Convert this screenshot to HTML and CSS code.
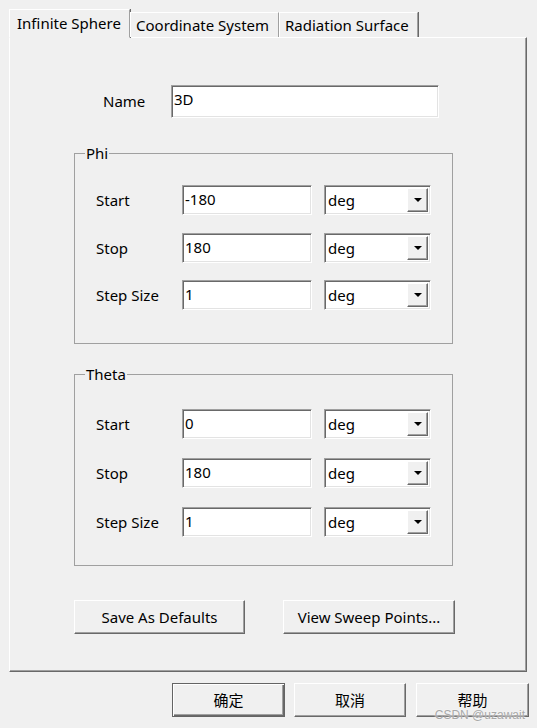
FILE: index.html
```html
<!DOCTYPE html>
<html>
<head>
<meta charset="utf-8">
<link rel="stylesheet" href="styles.css">
</head>
<body>
<div class="dialog">
  <div class="tabs">
    <div class="tab active t1">Infinite Sphere</div>
    <div class="tab t2">Coordinate System</div>
    <div class="tab t3">Radiation Surface</div>
  </div>
  <div class="panel">
    <div class="name-row">
      <span class="label name-label">Name</span>
      <div class="field name-field">3D</div>
    </div>
    <div class="group phi">
      <span class="legend">Phi</span>
      <div class="grid">
        <span class="label">Start</span>
        <div class="field">-180</div>
        <div class="select"><span class="sel-text">deg</span><span class="drop"><span class="arrow"></span></span></div>
        <span class="label">Stop</span>
        <div class="field">180</div>
        <div class="select"><span class="sel-text">deg</span><span class="drop"><span class="arrow"></span></span></div>
        <span class="label">Step Size</span>
        <div class="field">1</div>
        <div class="select"><span class="sel-text">deg</span><span class="drop"><span class="arrow"></span></span></div>
      </div>
    </div>
    <div class="group theta">
      <span class="legend">Theta</span>
      <div class="grid">
        <span class="label">Start</span>
        <div class="field">0</div>
        <div class="select"><span class="sel-text">deg</span><span class="drop"><span class="arrow"></span></span></div>
        <span class="label">Stop</span>
        <div class="field">180</div>
        <div class="select"><span class="sel-text">deg</span><span class="drop"><span class="arrow"></span></span></div>
        <span class="label">Step Size</span>
        <div class="field">1</div>
        <div class="select"><span class="sel-text">deg</span><span class="drop"><span class="arrow"></span></span></div>
      </div>
    </div>
    <div class="panel-buttons">
      <div class="btn save">Save As Defaults</div>
      <div class="btn view">View Sweep Points...</div>
    </div>
  </div>
  <div class="footer">
    <div class="btn default ok">确定</div>
    <div class="btn cancel">取消</div>
    <div class="btn help">帮助</div>
  </div>
  <div class="watermark">CSDN @uzawait</div>
</div>
</body>
</html>
```
FILE: styles.css
```css
html, body {
  margin: 0;
  padding: 0;
  background: #f0f0f0;
}
body {
  font-family: "Noto Sans", "Noto Sans CJK SC", sans-serif;
  font-size: 15px;
  color: #000;
}
.dialog {
  position: relative;
  width: 537px;
  height: 728px;
  overflow: hidden;
}
.tabs {
  display: flex;
  align-items: flex-end;
  padding-left: 9px;
  height: 38px;
  margin-bottom: -1px;
  position: relative;
  z-index: 1;
}
.tab {
  box-sizing: border-box;
  height: 25px;
  border-top: 1px solid #fff;
  border-left: 1px solid #fff;
  border-right: 1px solid #a0a0a0;
  box-shadow: 1px 0 0 #696969;
  line-height: 24px;
  padding-left: 5px;
  background: #f0f0f0;
  white-space: nowrap;
  margin-bottom: 1px;
}
.tab.active {
  height: 29px;
  line-height: 26px;
  padding-left: 7px;
  margin-bottom: 0;
  border-bottom: 1px solid #f0f0f0;
}
.t1 { width: 121px; }
.t2 { width: 149px; }
.t3 { width: 139px; }
.panel {
  box-sizing: border-box;
  margin-left: 9px;
  width: 518px;
  height: 635px;
  border-top: 1px solid #fff;
  border-left: 1px solid #fff;
  border-right: 1px solid #696969;
  border-bottom: 1px solid #696969;
  box-shadow: inset -1px -1px 0 #a0a0a0;
  padding-top: 46px;
}
.label {
  line-height: 30px;
  white-space: nowrap;
}
.name-row {
  display: flex;
  align-items: center;
  padding-left: 93px;
}
.name-label {
  width: 68px;
  line-height: 34px;
}
.field {
  box-sizing: border-box;
  background: #fff;
  border-top: 1px solid #a0a0a0;
  border-left: 1px solid #a0a0a0;
  border-right: 1px solid #fff;
  border-bottom: 1px solid #fff;
  box-shadow: inset 1px 1px 0 #696969, inset -1px -1px 0 #e3e3e3;
  padding-left: 2px;
  padding-top: 1px;
  line-height: 24px;
  height: 30px;
  white-space: nowrap;
}
.name-field {
  width: 268px;
  height: 33px;
  padding-top: 1px;
}
.group {
  box-sizing: border-box;
  margin-left: 64px;
  width: 379px;
  border: 1px solid #a0a0a0;
}
.phi {
  margin-top: 35px;
  padding-bottom: 33px;
}
.theta {
  margin-top: 30px;
  padding-bottom: 28px;
}
.legend {
  display: block;
  width: fit-content;
  margin-top: -11px;
  margin-left: 10px;
  padding: 0 1px;
  height: 20px;
  line-height: 20px;
  background: #f0f0f0;
}
.grid {
  display: grid;
  grid-template-columns: 74px 130px 107px;
  column-gap: 12px;
  grid-auto-rows: 30px;
  margin-left: 21px;
}
.phi .grid {
  margin-top: 22px;
  row-gap: 17.5px;
}
.theta .grid {
  margin-top: 25px;
  row-gap: 19px;
}
.select {
  box-sizing: border-box;
  display: flex;
  align-items: stretch;
  background: #fff;
  border-top: 1px solid #a0a0a0;
  border-left: 1px solid #a0a0a0;
  border-right: 1px solid #fff;
  border-bottom: 1px solid #fff;
  box-shadow: inset 1px 1px 0 #696969, inset -1px -1px 0 #e3e3e3;
  padding: 2px;
  height: 30px;
}
.sel-text {
  flex: 1;
  line-height: 24px;
  padding-left: 1px;
}
.drop {
  box-sizing: border-box;
  width: 21px;
  background: #f0f0f0;
  border-top: 1px solid #fff;
  border-left: 1px solid #fff;
  border-right: 1px solid #696969;
  border-bottom: 1px solid #696969;
  box-shadow: inset -1px -1px 0 #a0a0a0;
  display: flex;
  align-items: center;
  justify-content: center;
}
.arrow {
  width: 0;
  height: 0;
  border-left: 4px solid transparent;
  border-right: 4px solid transparent;
  border-top: 4px solid #000;
}
.panel-buttons {
  display: flex;
  margin-top: 34px;
  margin-left: 64px;
  gap: 38px;
}
.btn {
  box-sizing: border-box;
  height: 34px;
  border-top: 1px solid #fff;
  border-left: 1px solid #fff;
  border-right: 1px solid #696969;
  border-bottom: 1px solid #696969;
  box-shadow: inset -1px -1px 0 #a0a0a0;
  background: #f0f0f0;
  text-align: center;
  line-height: 33px;
  white-space: nowrap;
}
.save { width: 171px; }
.view { width: 172px; }
.footer {
  display: flex;
  margin-top: 11px;
  margin-left: 172px;
}
.ok { width: 113px; margin-right: 9px; }
.cancel { width: 112px; margin-right: 10px; }
.help { width: 113px; }
.btn.default {
  border: 1px solid #646464;
  box-shadow: inset 1px 1px 0 #fff, inset -1px -1px 0 #696969, inset -2px -2px 0 #a0a0a0;
}
.watermark {
  position: absolute;
  right: 12px;
  bottom: 6px;
  font-family: "Liberation Sans", sans-serif;
  font-size: 12px;
  color: #a8a8a8;
  text-shadow: 0 0 2px #fff;
  line-height: 14px;
}
```
